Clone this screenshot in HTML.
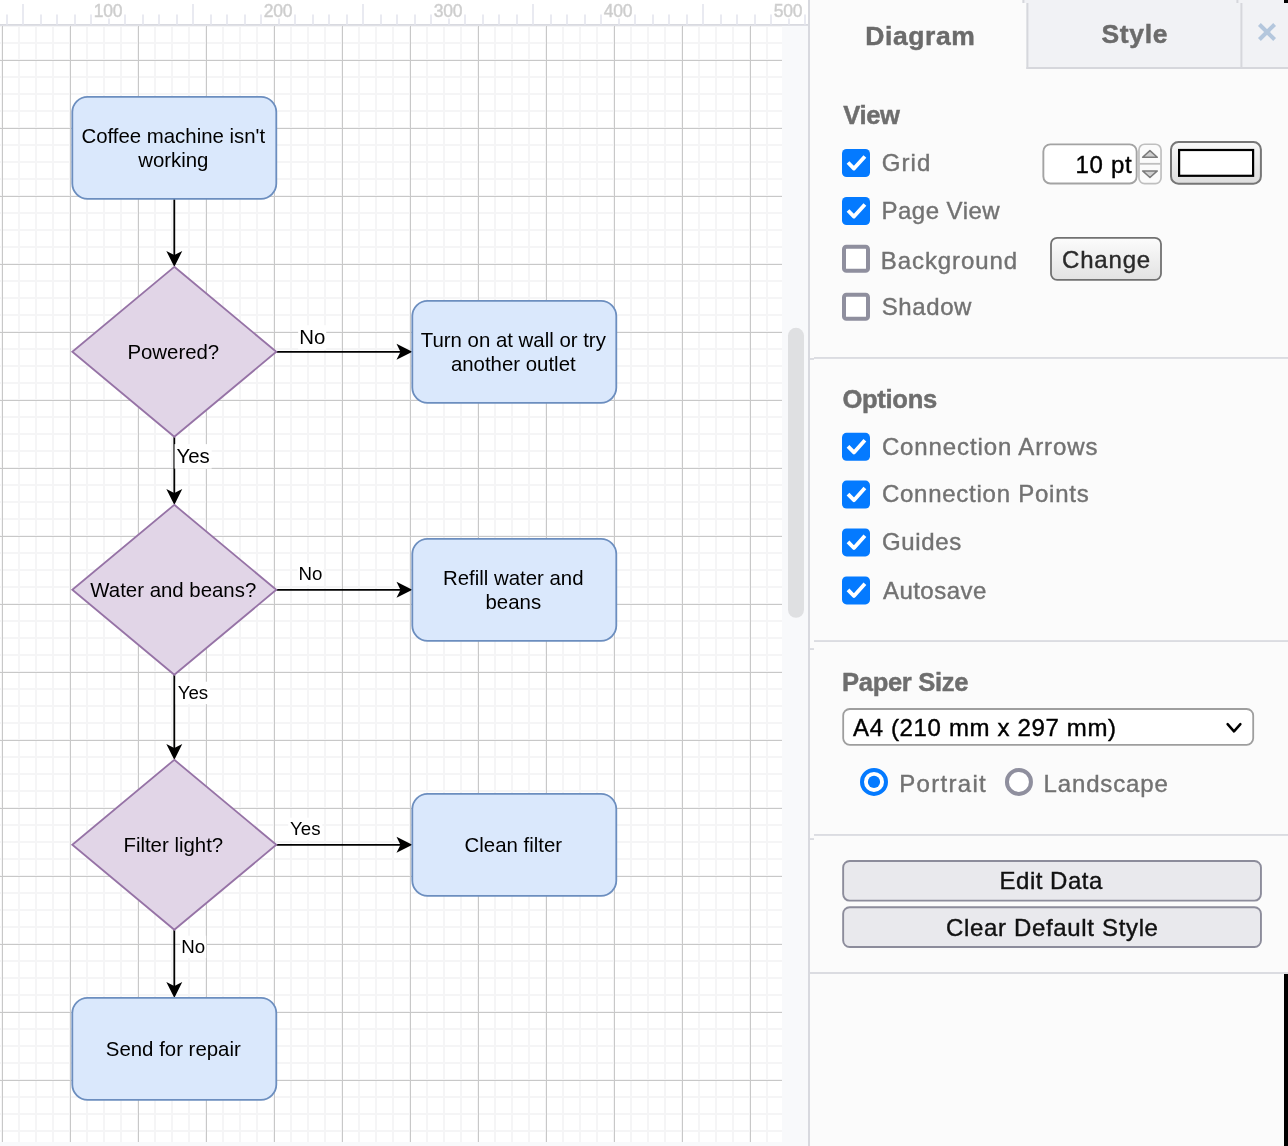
<!DOCTYPE html>
<html><head><meta charset="utf-8"><title>draw.io</title>
<style>
html,body{margin:0;padding:0;}
body{width:1288px;height:1146px;overflow:hidden;position:relative;background:#f8f9fb;font-family:"Liberation Sans",sans-serif;}
#cv{position:absolute;left:0;top:0;width:808px;height:1146px;}
text{filter:grayscale(1);}
.t{font-family:"Liberation Sans",sans-serif;font-size:20.4px;fill:#000;text-anchor:middle;}
.e{font-family:"Liberation Sans",sans-serif;font-size:19.4px;fill:#000;text-anchor:middle;}
.r{font-family:"Liberation Sans",sans-serif;font-size:17.5px;fill:#cccccc;stroke:#d2d2d2;stroke-width:0.5px;text-anchor:middle;letter-spacing:-0.3px;}
#panel{position:absolute;left:808px;top:0;width:480px;height:1146px;background:#fbfbfb;}
#panel *{box-sizing:border-box;}
.abs{position:absolute;}
.h{position:absolute;left:34.8px;font-weight:bold;color:#6e6e6e;font-size:24.9px;line-height:30px;white-space:nowrap;}
.l{position:absolute;left:74.5px;color:#7a7a7a;font-size:24px;line-height:30px;white-space:nowrap;}
.cb{position:absolute;left:34px;width:28px;height:28px;border-radius:4.8px;}
.cb.on{background:#047aff;}
.cb.off{background:#fff;border:3px solid #8f8f9d;}
.sep{position:absolute;left:6px;right:0;height:2px;background:#dbdce1;}
.btn{position:absolute;left:34px;width:420px;height:42px;border:2px solid #8d8d9b;border-radius:7.5px;background:#e9e9ed;color:#111;font-size:24.9px;line-height:37px;text-align:center;white-space:nowrap;}
</style></head><body>
<svg id="cv" width="808" height="1146" viewBox="0 0 808 1146">
<defs>
<pattern id="gmin" x="-7" y="0" width="17" height="17" patternUnits="userSpaceOnUse"><rect x="8" y="0" width="2" height="17" fill="#f5f5f6"/><rect x="0" y="8" width="17" height="2" fill="#f5f5f6"/></pattern>
<pattern id="gmaj" x="-32" y="26" width="68" height="68" patternUnits="userSpaceOnUse"><rect x="34" y="0" width="1" height="68" fill="#c8c8c8"/><rect x="0" y="34" width="68" height="1" fill="#c8c8c8"/></pattern>
</defs>
<rect x="0" y="26" width="782" height="1116" fill="#ffffff"/>
<rect x="0" y="26" width="782" height="1116" fill="url(#gmin)"/>
<rect x="0" y="26" width="782" height="1116" fill="url(#gmaj)"/>
<path d="M 174.3 198.8 L 174.3 255.98" stroke="#000" stroke-width="1.8" fill="none"/>
<path d="M 174.3 264.90 L 168.35 253.00 L 174.3 255.98 L 180.25 253.00 Z" fill="#000" stroke="#000" stroke-width="1.8" stroke-linejoin="miter"/>
<path d="M 174.3 436.8 L 174.3 493.97" stroke="#000" stroke-width="1.8" fill="none"/>
<path d="M 174.3 502.90 L 168.35 491.00 L 174.3 493.97 L 180.25 491.00 Z" fill="#000" stroke="#000" stroke-width="1.8" stroke-linejoin="miter"/>
<path d="M 174.3 674.8 L 174.3 748.98" stroke="#000" stroke-width="1.8" fill="none"/>
<path d="M 174.3 757.90 L 168.35 746.00 L 174.3 748.98 L 180.25 746.00 Z" fill="#000" stroke="#000" stroke-width="1.8" stroke-linejoin="miter"/>
<path d="M 174.3 929.8 L 174.3 986.98" stroke="#000" stroke-width="1.8" fill="none"/>
<path d="M 174.3 995.90 L 168.35 984.00 L 174.3 986.98 L 180.25 984.00 Z" fill="#000" stroke="#000" stroke-width="1.8" stroke-linejoin="miter"/>
<path d="M 276.3 351.8 L 401.47 351.8" stroke="#000" stroke-width="1.8" fill="none"/>
<path d="M 410.40 351.8 L 398.50 345.85 L 401.47 351.8 L 398.50 357.75 Z" fill="#000" stroke="#000" stroke-width="1.8" stroke-linejoin="miter"/>
<path d="M 276.3 589.8 L 401.47 589.8" stroke="#000" stroke-width="1.8" fill="none"/>
<path d="M 410.40 589.8 L 398.50 583.85 L 401.47 589.8 L 398.50 595.75 Z" fill="#000" stroke="#000" stroke-width="1.8" stroke-linejoin="miter"/>
<path d="M 276.3 844.8 L 401.47 844.8" stroke="#000" stroke-width="1.8" fill="none"/>
<path d="M 410.40 844.8 L 398.50 838.85 L 401.47 844.8 L 398.50 850.75 Z" fill="#000" stroke="#000" stroke-width="1.8" stroke-linejoin="miter"/>
<rect x="72.30" y="96.80" width="204" height="102" rx="15.3" ry="15.3" fill="#dae8fc" stroke="#6c8ebf" stroke-width="1.8"/>
<text x="173.30" y="142.55" class="t">Coffee machine isn't</text>
<text x="173.30" y="167.05" class="t">working</text>
<path d="M 174.3 266.8 L 276.3 351.8 L 174.3 436.8 L 72.30000000000001 351.8 Z" fill="#e1d5e7" stroke="#9673a6" stroke-width="1.8" stroke-linejoin="miter"/>
<text x="173.30" y="358.80" class="t">Powered?</text>
<path d="M 174.3 504.79999999999995 L 276.3 589.8 L 174.3 674.8 L 72.30000000000001 589.8 Z" fill="#e1d5e7" stroke="#9673a6" stroke-width="1.8" stroke-linejoin="miter"/>
<text x="173.30" y="596.80" class="t">Water and beans?</text>
<path d="M 174.3 759.8 L 276.3 844.8 L 174.3 929.8 L 72.30000000000001 844.8 Z" fill="#e1d5e7" stroke="#9673a6" stroke-width="1.8" stroke-linejoin="miter"/>
<text x="173.30" y="851.80" class="t">Filter light?</text>
<rect x="72.30" y="997.80" width="204" height="102" rx="15.3" ry="15.3" fill="#dae8fc" stroke="#6c8ebf" stroke-width="1.8"/>
<text x="173.30" y="1055.80" class="t">Send for repair</text>
<rect x="412.30" y="300.80" width="204" height="102" rx="15.3" ry="15.3" fill="#dae8fc" stroke="#6c8ebf" stroke-width="1.8"/>
<text x="513.30" y="346.55" class="t">Turn on at wall or try</text>
<text x="513.30" y="371.05" class="t">another outlet</text>
<rect x="412.30" y="538.80" width="204" height="102" rx="15.3" ry="15.3" fill="#dae8fc" stroke="#6c8ebf" stroke-width="1.8"/>
<text x="513.30" y="584.55" class="t">Refill water and</text>
<text x="513.30" y="609.05" class="t">beans</text>
<rect x="412.30" y="793.80" width="204" height="102" rx="15.3" ry="15.3" fill="#dae8fc" stroke="#6c8ebf" stroke-width="1.8"/>
<text x="513.30" y="851.80" class="t">Clean filter</text>
<rect x="298.16" y="325.23" width="28.07" height="24.48" fill="#fff"/>
<text x="312.2" y="343.9" class="t" style="font-size:20.4px">No</text>
<rect x="174.53" y="444.13" width="37.15" height="24.48" fill="#fff"/>
<text x="193.1" y="462.8" class="t" style="font-size:20.4px">Yes</text>
<rect x="297.50" y="562.79" width="25.90" height="22.44" fill="#fff"/>
<text x="310.45" y="579.9" class="t" style="font-size:18.7px">No</text>
<rect x="175.79" y="681.69" width="34.22" height="22.44" fill="#fff"/>
<text x="192.9" y="698.8" class="t" style="font-size:18.7px">Yes</text>
<rect x="288.19" y="817.69" width="34.22" height="22.44" fill="#fff"/>
<text x="305.3" y="834.8" class="t" style="font-size:18.7px">Yes</text>
<rect x="180.25" y="935.69" width="25.90" height="22.44" fill="#fff"/>
<text x="193.2" y="952.8" class="t" style="font-size:18.7px">No</text>

<rect x="0" y="0" width="808" height="24" fill="#fff"/><rect x="0" y="24" width="808" height="1.8" fill="#d9dae0"/><rect x="6" y="14.5" width="2" height="10" fill="#e9eaf1"/><rect x="22" y="4" width="2" height="20.5" fill="#e9eaf1"/><rect x="40" y="14.5" width="2" height="10" fill="#e9eaf1"/><rect x="56" y="14.5" width="2" height="10" fill="#e9eaf1"/><rect x="74" y="14.5" width="2" height="10" fill="#e9eaf1"/><rect x="90" y="14.5" width="2" height="10" fill="#e9eaf1"/><rect x="108" y="18.5" width="2" height="6" fill="#e9eaf1"/><rect x="124" y="14.5" width="2" height="10" fill="#e9eaf1"/><rect x="142" y="14.5" width="2" height="10" fill="#e9eaf1"/><rect x="158" y="14.5" width="2" height="10" fill="#e9eaf1"/><rect x="176" y="14.5" width="2" height="10" fill="#e9eaf1"/><rect x="192" y="4" width="2" height="20.5" fill="#e9eaf1"/><rect x="210" y="14.5" width="2" height="10" fill="#e9eaf1"/><rect x="226" y="14.5" width="2" height="10" fill="#e9eaf1"/><rect x="244" y="14.5" width="2" height="10" fill="#e9eaf1"/><rect x="260" y="14.5" width="2" height="10" fill="#e9eaf1"/><rect x="278" y="18.5" width="2" height="6" fill="#e9eaf1"/><rect x="294" y="14.5" width="2" height="10" fill="#e9eaf1"/><rect x="312" y="14.5" width="2" height="10" fill="#e9eaf1"/><rect x="328" y="14.5" width="2" height="10" fill="#e9eaf1"/><rect x="346" y="14.5" width="2" height="10" fill="#e9eaf1"/><rect x="362" y="4" width="2" height="20.5" fill="#e9eaf1"/><rect x="380" y="14.5" width="2" height="10" fill="#e9eaf1"/><rect x="396" y="14.5" width="2" height="10" fill="#e9eaf1"/><rect x="414" y="14.5" width="2" height="10" fill="#e9eaf1"/><rect x="430" y="14.5" width="2" height="10" fill="#e9eaf1"/><rect x="448" y="18.5" width="2" height="6" fill="#e9eaf1"/><rect x="464" y="14.5" width="2" height="10" fill="#e9eaf1"/><rect x="482" y="14.5" width="2" height="10" fill="#e9eaf1"/><rect x="498" y="14.5" width="2" height="10" fill="#e9eaf1"/><rect x="516" y="14.5" width="2" height="10" fill="#e9eaf1"/><rect x="532" y="4" width="2" height="20.5" fill="#e9eaf1"/><rect x="550" y="14.5" width="2" height="10" fill="#e9eaf1"/><rect x="566" y="14.5" width="2" height="10" fill="#e9eaf1"/><rect x="584" y="14.5" width="2" height="10" fill="#e9eaf1"/><rect x="600" y="14.5" width="2" height="10" fill="#e9eaf1"/><rect x="618" y="18.5" width="2" height="6" fill="#e9eaf1"/><rect x="634" y="14.5" width="2" height="10" fill="#e9eaf1"/><rect x="652" y="14.5" width="2" height="10" fill="#e9eaf1"/><rect x="668" y="14.5" width="2" height="10" fill="#e9eaf1"/><rect x="686" y="14.5" width="2" height="10" fill="#e9eaf1"/><rect x="702" y="4" width="2" height="20.5" fill="#e9eaf1"/><rect x="720" y="14.5" width="2" height="10" fill="#e9eaf1"/><rect x="736" y="14.5" width="2" height="10" fill="#e9eaf1"/><rect x="754" y="14.5" width="2" height="10" fill="#e9eaf1"/><rect x="770" y="14.5" width="2" height="10" fill="#e9eaf1"/><rect x="788" y="18.5" width="2" height="6" fill="#e9eaf1"/><rect x="804" y="14.5" width="2" height="10" fill="#e9eaf1"/><text x="108.0" y="17.4" class="r">100</text><text x="278.0" y="17.4" class="r">200</text><text x="448.0" y="17.4" class="r">300</text><text x="618.0" y="17.4" class="r">400</text><text x="788.0" y="17.4" class="r">500</text>
<rect x="788" y="327.8" width="16" height="290" rx="8" ry="8" fill="#dfe0e2"/>
</svg>
<div id="panel">
<svg class="abs" style="left:0;top:0" width="480" height="1146" viewBox="0 0 480 1146">
<defs><linearGradient id="g1" x1="0" y1="0" x2="0" y2="1"><stop offset="0" stop-color="#f8f8f8"/><stop offset="1" stop-color="#dedede"/></linearGradient><linearGradient id="g2" x1="0" y1="0" x2="0" y2="1"><stop offset="0" stop-color="#fcfcfc"/><stop offset="1" stop-color="#e2e2e2"/></linearGradient></defs>
<rect x="0.00" y="0.00" width="2.00" height="1146.00" rx="0.00" ry="0.00" fill="#d8d9df"/>
<rect x="218.40" y="0.00" width="261.60" height="69.00" rx="0.00" ry="0.00" fill="#f1f2f5"/>
<rect x="218.40" y="0.00" width="2.00" height="69.00" rx="0.00" ry="0.00" fill="#d6d7dc"/>
<rect x="218.40" y="67.00" width="261.60" height="2.00" rx="0.00" ry="0.00" fill="#d6d7dc"/>
<rect x="432.40" y="3.00" width="2.00" height="64.00" rx="0.00" ry="0.00" fill="#d6d7dc"/>
<rect x="214.40" y="0.00" width="265.60" height="3.00" rx="0.00" ry="0.00" fill="#f1f2f5"/>
<rect x="214.40" y="0.00" width="2.00" height="3.00" rx="0.00" ry="0.00" fill="#d6d7dc"/>
<rect x="428.40" y="0.00" width="2.00" height="3.00" rx="0.00" ry="0.00" fill="#d6d7dc"/>
<rect x="476.00" y="0.00" width="4.00" height="3.00" rx="0.00" ry="0.00" fill="#000"/>
<path d="M 451.40 24.5 L 466.60 39.5 M 466.60 24.5 L 451.40 39.5" stroke="#b4c7dd" stroke-width="4" fill="none"/>
<rect x="34.00" y="149.00" width="28.00" height="28.00" rx="4.60" ry="4.60" fill="#047aff"/>
<path d="M 40.00 162.50 L 45.95 168.60 L 56.90 156.40" stroke="#fff" stroke-width="3.8" fill="none" stroke-linecap="butt" stroke-linejoin="round"/>
<rect x="34.00" y="197.00" width="28.00" height="28.00" rx="4.60" ry="4.60" fill="#047aff"/>
<path d="M 40.00 210.50 L 45.95 216.60 L 56.90 204.40" stroke="#fff" stroke-width="3.8" fill="none" stroke-linecap="butt" stroke-linejoin="round"/>
<rect x="36.00" y="246.80" width="24.00" height="24.00" rx="2.40" ry="2.40" fill="#fff" stroke="#8f8f9e" stroke-width="4"/>
<rect x="36.00" y="294.80" width="24.00" height="24.00" rx="2.40" ry="2.40" fill="#fff" stroke="#8f8f9e" stroke-width="4"/>
<rect x="235.35" y="144.35" width="93.30" height="39.20" rx="7.05" ry="7.05" fill="#fff" stroke="#a3a3a3" stroke-width="1.9"/>
<rect x="330.95" y="144.25" width="22.10" height="39.40" rx="5.65" ry="5.65" fill="#fbfbfb" stroke="#bfbfbf" stroke-width="1.7"/>
<rect x="331.50" y="162.90" width="21.00" height="1.80" rx="0.00" ry="0.00" fill="#bfbfbf"/>
<path d="M 341.95 150.6 L 349.30 157.3 L 334.60 157.3 Z" fill="#cfcfcf" stroke="#7b7b7b" stroke-width="1.5" stroke-linejoin="round"/>
<path d="M 334.60 170.9 L 349.30 170.9 L 341.95 177.5 Z" fill="#cfcfcf" stroke="#7b7b7b" stroke-width="1.5" stroke-linejoin="round"/>
<rect x="363.00" y="142.00" width="89.90" height="41.70" rx="7.50" ry="7.50" fill="url(#g1)" stroke="#767676" stroke-width="2"/>
<rect x="371.10" y="150.00" width="74.00" height="25.80" rx="0.00" ry="0.00" fill="#fff" stroke="#000" stroke-width="2.2"/>
<rect x="243.00" y="237.80" width="110.00" height="42.00" rx="6.10" ry="6.10" fill="url(#g2)" stroke="#717171" stroke-width="1.8"/>
<rect x="6.00" y="357.00" width="474.00" height="1.90" rx="0.00" ry="0.00" fill="#dbdce1"/>
<rect x="2.00" y="358.00" width="4.00" height="1.90" rx="0.00" ry="0.00" fill="#dbdce1"/>
<rect x="34.00" y="432.80" width="28.00" height="28.00" rx="4.60" ry="4.60" fill="#047aff"/>
<path d="M 40.00 446.30 L 45.95 452.40 L 56.90 440.20" stroke="#fff" stroke-width="3.8" fill="none" stroke-linecap="butt" stroke-linejoin="round"/>
<rect x="34.00" y="480.60" width="28.00" height="28.00" rx="4.60" ry="4.60" fill="#047aff"/>
<path d="M 40.00 494.10 L 45.95 500.20 L 56.90 488.00" stroke="#fff" stroke-width="3.8" fill="none" stroke-linecap="butt" stroke-linejoin="round"/>
<rect x="34.00" y="528.40" width="28.00" height="28.00" rx="4.60" ry="4.60" fill="#047aff"/>
<path d="M 40.00 541.90 L 45.95 548.00 L 56.90 535.80" stroke="#fff" stroke-width="3.8" fill="none" stroke-linecap="butt" stroke-linejoin="round"/>
<rect x="34.00" y="576.40" width="28.00" height="28.00" rx="4.60" ry="4.60" fill="#047aff"/>
<path d="M 40.00 589.90 L 45.95 596.00 L 56.90 583.80" stroke="#fff" stroke-width="3.8" fill="none" stroke-linecap="butt" stroke-linejoin="round"/>
<rect x="6.00" y="640.10" width="474.00" height="1.90" rx="0.00" ry="0.00" fill="#dbdce1"/>
<rect x="2.00" y="648.10" width="4.00" height="1.90" rx="0.00" ry="0.00" fill="#dbdce1"/>
<rect x="35.20" y="709.00" width="410.00" height="35.90" rx="6.60" ry="6.60" fill="#fff" stroke="#9e9e9e" stroke-width="1.8"/>
<path d="M 419.60 724.1 L 426.00 731.4 L 432.40 724.1" stroke="#000" stroke-width="2.5" fill="none" stroke-linecap="round" stroke-linejoin="round"/>
<circle cx="66" cy="781.9" r="12" fill="#fff" stroke="#047aff" stroke-width="4"/><circle cx="66" cy="781.9" r="6.1" fill="#047aff"/>
<circle cx="210.95" cy="781.9" r="12" fill="#fff" stroke="#8f8f9e" stroke-width="4"/>
<rect x="6.00" y="834.00" width="474.00" height="1.90" rx="0.00" ry="0.00" fill="#dbdce1"/>
<rect x="2.00" y="838.10" width="4.00" height="1.90" rx="0.00" ry="0.00" fill="#dbdce1"/>
<rect x="35.15" y="860.95" width="417.80" height="39.70" rx="6.55" ry="6.55" fill="#e9e9ed" stroke="#8c8c9b" stroke-width="1.9"/>
<rect x="35.15" y="907.25" width="417.80" height="39.80" rx="6.55" ry="6.55" fill="#e9e9ed" stroke="#8c8c9b" stroke-width="1.9"/>
<rect x="2.00" y="972.00" width="478.00" height="2.00" rx="0.00" ry="0.00" fill="#dbdce1"/>
<rect x="476.00" y="974.00" width="4.00" height="172.00" rx="0.00" ry="0.00" fill="#000"/>
</svg>
<div class="abs" style="left:57.20px;top:21.12px;font-weight:bold;-webkit-text-stroke:0.45px;font-size:26.5px;letter-spacing:0.6px;line-height:30px;color:#6b6b6b;white-space:nowrap;filter:grayscale(1);">Diagram</div>
<div class="abs" style="left:293.40px;top:18.92px;font-weight:bold;-webkit-text-stroke:0.45px;font-size:26.5px;letter-spacing:0.7px;line-height:30px;color:#6b6b6b;white-space:nowrap;filter:grayscale(1);">Style</div>
<div class="abs" style="left:35.20px;top:99.83px;font-weight:bold;-webkit-text-stroke:0.45px;font-size:25.6px;letter-spacing:-0.35px;line-height:30px;color:#6e6e6e;white-space:nowrap;filter:grayscale(1);">View</div>
<div class="abs" style="left:73.80px;top:147.78px;-webkit-text-stroke:0.4px;font-size:24px;letter-spacing:1.05px;line-height:30px;color:#727272;white-space:nowrap;filter:grayscale(1);">Grid</div>
<div class="abs" style="left:73.60px;top:195.58px;-webkit-text-stroke:0.4px;font-size:24px;letter-spacing:0.46px;line-height:30px;color:#727272;white-space:nowrap;filter:grayscale(1);">Page View</div>
<div class="abs" style="left:72.80px;top:246.08px;-webkit-text-stroke:0.4px;font-size:24px;letter-spacing:0.92px;line-height:30px;color:#727272;white-space:nowrap;filter:grayscale(1);">Background</div>
<div class="abs" style="left:73.80px;top:291.78px;-webkit-text-stroke:0.4px;font-size:24px;letter-spacing:0.57px;line-height:30px;color:#727272;white-space:nowrap;filter:grayscale(1);">Shadow</div>
<div class="abs" style="left:267.40px;top:149.68px;-webkit-text-stroke:0.4px;font-size:24px;letter-spacing:0.75px;line-height:30px;color:#000;white-space:nowrap;filter:grayscale(1);">10 pt</div>
<div class="abs" style="left:254.00px;top:244.78px;-webkit-text-stroke:0.4px;font-size:24px;letter-spacing:0.83px;line-height:30px;color:#2a2a2a;white-space:nowrap;filter:grayscale(1);">Change</div>
<div class="abs" style="left:34.40px;top:383.83px;font-weight:bold;-webkit-text-stroke:0.45px;font-size:25.6px;letter-spacing:-0.3px;line-height:30px;color:#6e6e6e;white-space:nowrap;filter:grayscale(1);">Options</div>
<div class="abs" style="left:73.90px;top:431.58px;-webkit-text-stroke:0.4px;font-size:24px;letter-spacing:0.88px;line-height:30px;color:#727272;white-space:nowrap;filter:grayscale(1);">Connection Arrows</div>
<div class="abs" style="left:73.90px;top:479.38px;-webkit-text-stroke:0.4px;font-size:24px;letter-spacing:0.75px;line-height:30px;color:#727272;white-space:nowrap;filter:grayscale(1);">Connection Points</div>
<div class="abs" style="left:73.90px;top:527.48px;-webkit-text-stroke:0.4px;font-size:24px;letter-spacing:0.67px;line-height:30px;color:#727272;white-space:nowrap;filter:grayscale(1);">Guides</div>
<div class="abs" style="left:74.90px;top:575.58px;-webkit-text-stroke:0.4px;font-size:24px;letter-spacing:0.48px;line-height:30px;color:#727272;white-space:nowrap;filter:grayscale(1);">Autosave</div>
<div class="abs" style="left:34.00px;top:666.73px;font-weight:bold;-webkit-text-stroke:0.45px;font-size:25.6px;letter-spacing:-0.33px;line-height:30px;color:#6e6e6e;white-space:nowrap;filter:grayscale(1);">Paper Size</div>
<div class="abs" style="left:45.00px;top:712.88px;-webkit-text-stroke:0.4px;font-size:24px;letter-spacing:0.65px;line-height:30px;color:#000;white-space:nowrap;filter:grayscale(1);">A4 (210 mm x 297 mm)</div>
<div class="abs" style="left:91.30px;top:768.78px;-webkit-text-stroke:0.4px;font-size:24px;letter-spacing:1.3px;line-height:30px;color:#727272;white-space:nowrap;filter:grayscale(1);">Portrait</div>
<div class="abs" style="left:235.60px;top:768.78px;-webkit-text-stroke:0.4px;font-size:24px;letter-spacing:0.84px;line-height:30px;color:#727272;white-space:nowrap;filter:grayscale(1);">Landscape</div>
<div class="abs" style="left:191.60px;top:866.48px;-webkit-text-stroke:0.4px;font-size:24px;letter-spacing:0.49px;line-height:30px;color:#111;white-space:nowrap;filter:grayscale(1);">Edit Data</div>
<div class="abs" style="left:138.00px;top:912.78px;-webkit-text-stroke:0.4px;font-size:24px;letter-spacing:0.66px;line-height:30px;color:#111;white-space:nowrap;filter:grayscale(1);">Clear Default Style</div>
</div>
</body></html>
